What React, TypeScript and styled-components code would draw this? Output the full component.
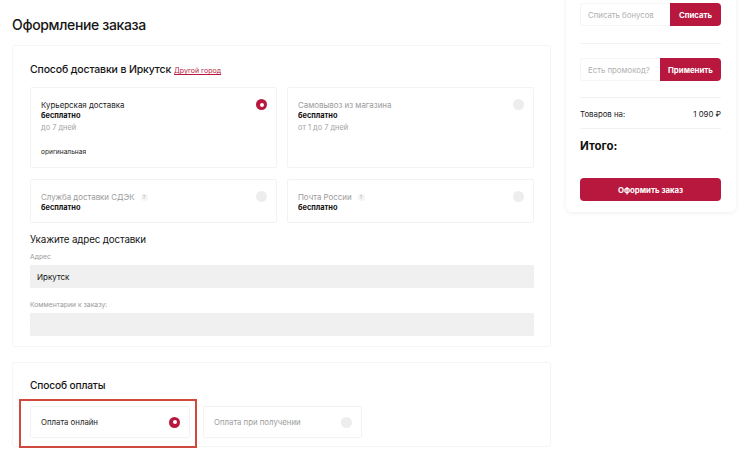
import React from "react";
import styled, { createGlobalStyle } from "styled-components";

const Global = createGlobalStyle`
  html, body { margin: 0; padding: 0; background: #fff; min-height: 100%; }
  body { font-family: Inter, "Noto Sans", Arial, sans-serif; color: #1d1d1f; }
  * { box-sizing: border-box; }
`;

const ACCENT = "#b8183e";

const Page = styled.div`
  display: grid;
  grid-template-columns: 539px 170px;
  column-gap: 15px;
  padding-left: 12px;
  align-items: start;
  min-height: 454px;
`;

const Main = styled.div`
  display: flex;
  flex-direction: column;
`;

const Title = styled.h1`
  margin: 15px 0 10px;
  font-size: 14px;
  line-height: 20px;
  font-weight: 500;
  letter-spacing: -0.35px;
  color: #161616;
`;

const Card = styled.section<{ $pt: number; $pb: number }>`
  border: 1px solid #f5f5f5;
  border-radius: 3px;
  background: #fff;
  box-shadow: 0 0 2px rgba(0, 0, 0, 0.02);
  padding: ${(p) => p.$pt}px 17px ${(p) => p.$pb}px 17px;
  & + & { margin-top: 15px; }
`;

const SectionHead = styled.div`
  display: flex;
  align-items: baseline;
  gap: 3px;
  height: 14px;
  line-height: 14px;
`;

const H2 = styled.h2<{ $size?: number; $weight?: number }>`
  margin: 0;
  font-size: ${(p) => p.$size ?? 10.5}px;
  font-weight: ${(p) => p.$weight ?? 500};
  letter-spacing: -0.15px;
  line-height: 14px;
  color: #151515;
`;

const CityLink = styled.a`
  font-size: 7px;
  color: ${ACCENT};
  text-decoration: underline;
`;

const OptionGrid = styled.div`
  display: grid;
  grid-template-columns: 247px 247px;
  column-gap: 10px;
  row-gap: 11px;
  margin-top: 10px;
`;

const Option = styled.div<{ $h: number }>`
  position: relative;
  height: ${(p) => p.$h}px;
  border: 1px solid #f3f3f3;
  border-radius: 2px;
  padding: 12px 10px 0 10px;
  display: flex;
  flex-direction: column;
`;

const OptTitle = styled.div<{ $active?: boolean }>`
  display: flex;
  align-items: center;
  gap: 4px;
  font-size: 7.9px;
  line-height: 10px;
  color: ${(p) => (p.$active ? "#222" : "#9a9a9a")};
`;

const Price = styled.div`
  font-size: 7.4px;
  line-height: 12px;
  font-weight: 700;
  color: #111;
`;

const Term = styled.div`
  font-size: 7.4px;
  line-height: 12px;
  color: #a3a3a3;
`;

const Note = styled.div`
  margin-top: auto;
  margin-bottom: 11px;
  font-size: 6.6px;
  color: #222;
`;

const Help = styled.span`
  width: 7px;
  height: 7px;
  border-radius: 50%;
  background: #f4f4f4;
  color: #b0b0b0;
  font-size: 5px;
  display: inline-flex;
  align-items: center;
  justify-content: center;
  margin-left: 2px;
`;

const Radio = styled.span<{ $on?: boolean }>`
  position: absolute;
  right: 9px;
  top: 11px;
  width: 11px;
  height: 11px;
  border-radius: 50%;
  background: ${(p) => (p.$on ? ACCENT : "#ededed")};
  display: flex;
  align-items: center;
  justify-content: center;
  &::after {
    content: "";
    display: ${(p) => (p.$on ? "block" : "none")};
    width: 4px;
    height: 4px;
    border-radius: 50%;
    background: #fff;
  }
`;

const AddressHead = styled.div`
  margin-top: 10px;
`;

const Label = styled.div<{ $mt: number }>`
  margin-top: ${(p) => p.$mt}px;
  font-size: 6.8px;
  line-height: 10px;
  color: #9a9a9a;
`;

const Field = styled.div`
  margin-top: 3px;
  height: 23px;
  width: 504px;
  background: #f0f0f0;
  border-radius: 1px;
  padding: 0 7px;
  display: flex;
  align-items: center;
  font-size: 8px;
  color: #111;
`;

const PayRow = styled.div`
  display: flex;
  gap: 13px;
  margin-top: 14px;
`;

const PayOption = styled.div<{ $w: number }>`
  position: relative;
  width: ${(p) => p.$w}px;
  height: 32px;
  border: 1px solid #f3f3f3;
  border-radius: 2px;
  padding: 0 9px 0 10px;
  display: flex;
  align-items: center;
  justify-content: space-between;
`;

const PayText = styled.span<{ $active?: boolean }>`
  font-size: 7.8px;
  color: ${(p) => (p.$active ? "#1e1e1e" : "#9c9c9c")};
`;

const Dot = styled.span<{ $on?: boolean }>`
  width: 11px;
  height: 11px;
  border-radius: 50%;
  background: ${(p) => (p.$on ? ACCENT : "#ededed")};
  display: flex;
  align-items: center;
  justify-content: center;
  &::after {
    content: "";
    display: ${(p) => (p.$on ? "block" : "none")};
    width: 4px;
    height: 4px;
    border-radius: 50%;
    background: #fff;
  }
`;

const Highlight = styled.div`
  position: absolute;
  left: -12px;
  right: -8px;
  top: -8px;
  bottom: -11px;
  border: 2.5px solid #cf4a3c;
  pointer-events: none;
  z-index: 2;
`;

const Side = styled.aside`
  margin-top: -12px;
  background: #fff;
  border-radius: 6px;
  box-shadow: 0 1px 5px rgba(0, 0, 0, 0.07);
  padding: 15px 15px 11px 14px;
  display: flex;
  flex-direction: column;
`;

const InputGroup = styled.div`
  display: flex;
  height: 23px;
`;

const FakeInput = styled.div`
  flex: 1;
  border: 1px solid #f5f5f5;
  border-right: none;
  border-radius: 3px 0 0 3px;
  display: flex;
  align-items: center;
  padding-left: 7px;
  font-size: 7.8px;
  color: #b0b0b0;
`;

const GroupBtn = styled.button<{ $w: number }>`
  width: ${(p) => p.$w}px;
  border: none;
  background: ${ACCENT};
  color: #fff;
  font-family: inherit;
  font-size: 7.8px;
  font-weight: 700;
  border-radius: 0 4px 4px 0;
  padding: 0;
`;

const Divider = styled.hr<{ $mt: number; $mb: number }>`
  border: none;
  border-top: 1px solid #f2f2f2;
  margin: ${(p) => p.$mt}px 0 ${(p) => p.$mb}px;
`;

const SumRow = styled.div`
  display: flex;
  justify-content: space-between;
  align-items: center;
  height: 12px;
  font-size: 7.8px;
  color: #1a1a1a;
`;

const Total = styled.div`
  margin-top: 10px;
  font-size: 11.5px;
  font-weight: 700;
  line-height: 14px;
  color: #111;
`;

const Submit = styled.button`
  margin-top: 25px;
  height: 23px;
  border: none;
  border-radius: 4px;
  background: ${ACCENT};
  color: #fff;
  font-family: inherit;
  font-size: 7.8px;
  font-weight: 700;
`;

export default function App() {
  return (
    <>
      <Global />
      <Page>
        <Main>
          <Title>Оформление заказа</Title>
          <Card $pt={17} $pb={10}>
            <SectionHead>
              <H2>Способ доставки в Иркутск</H2>
              <CityLink>Другой город</CityLink>
            </SectionHead>
            <OptionGrid>
              <Option $h={81}>
                <OptTitle $active>Курьерская доставка</OptTitle>
                <Price>бесплатно</Price>
                <Term>до 7 дней</Term>
                <Note>оригинальная</Note>
                <Radio $on />
              </Option>
              <Option $h={81}>
                <OptTitle>Самовывоз из магазина</OptTitle>
                <Price>бесплатно</Price>
                <Term>от 1 до 7 дней</Term>
                <Radio />
              </Option>
              <Option $h={44}>
                <OptTitle>
                  Служба доставки СДЭК<Help>?</Help>
                </OptTitle>
                <Price>бесплатно</Price>
                <Radio />
              </Option>
              <Option $h={44}>
                <OptTitle>
                  Почта России<Help>?</Help>
                </OptTitle>
                <Price>бесплатно</Price>
                <Radio />
              </Option>
            </OptionGrid>
            <AddressHead>
              <H2 $size={9.8} $weight={400}>Укажите адрес доставки</H2>
            </AddressHead>
            <Label $mt={5}>Адрес</Label>
            <Field>Иркутск</Field>
            <Label $mt={12}>Комментарии к заказу:</Label>
            <Field />
          </Card>
          <Card $pt={15} $pb={8}>
            <H2 $size={10.2}>Способ оплаты</H2>
            <PayRow>
              <PayOption $w={160}>
                <PayText $active>Оплата онлайн</PayText>
                <Dot $on />
                <Highlight />
              </PayOption>
              <PayOption $w={159}>
                <PayText>Оплата при получении</PayText>
                <Dot />
              </PayOption>
            </PayRow>
          </Card>
        </Main>
        <Side>
          <InputGroup>
            <FakeInput>Списать бонусов</FakeInput>
            <GroupBtn $w={51}>Списать</GroupBtn>
          </InputGroup>
          <Divider $mt={17} $mb={14} />
          <InputGroup>
            <FakeInput>Есть промокод?</FakeInput>
            <GroupBtn $w={61}>Применить</GroupBtn>
          </InputGroup>
          <Divider $mt={16} $mb={10} />
          <SumRow>
            <span>Товаров на:</span>
            <span>1 090 ₽</span>
          </SumRow>
          <Divider $mt={8} $mb={0} />
          <Total>Итого:</Total>
          <Submit>Оформить заказ</Submit>
        </Side>
      </Page>
    </>
  );
}
